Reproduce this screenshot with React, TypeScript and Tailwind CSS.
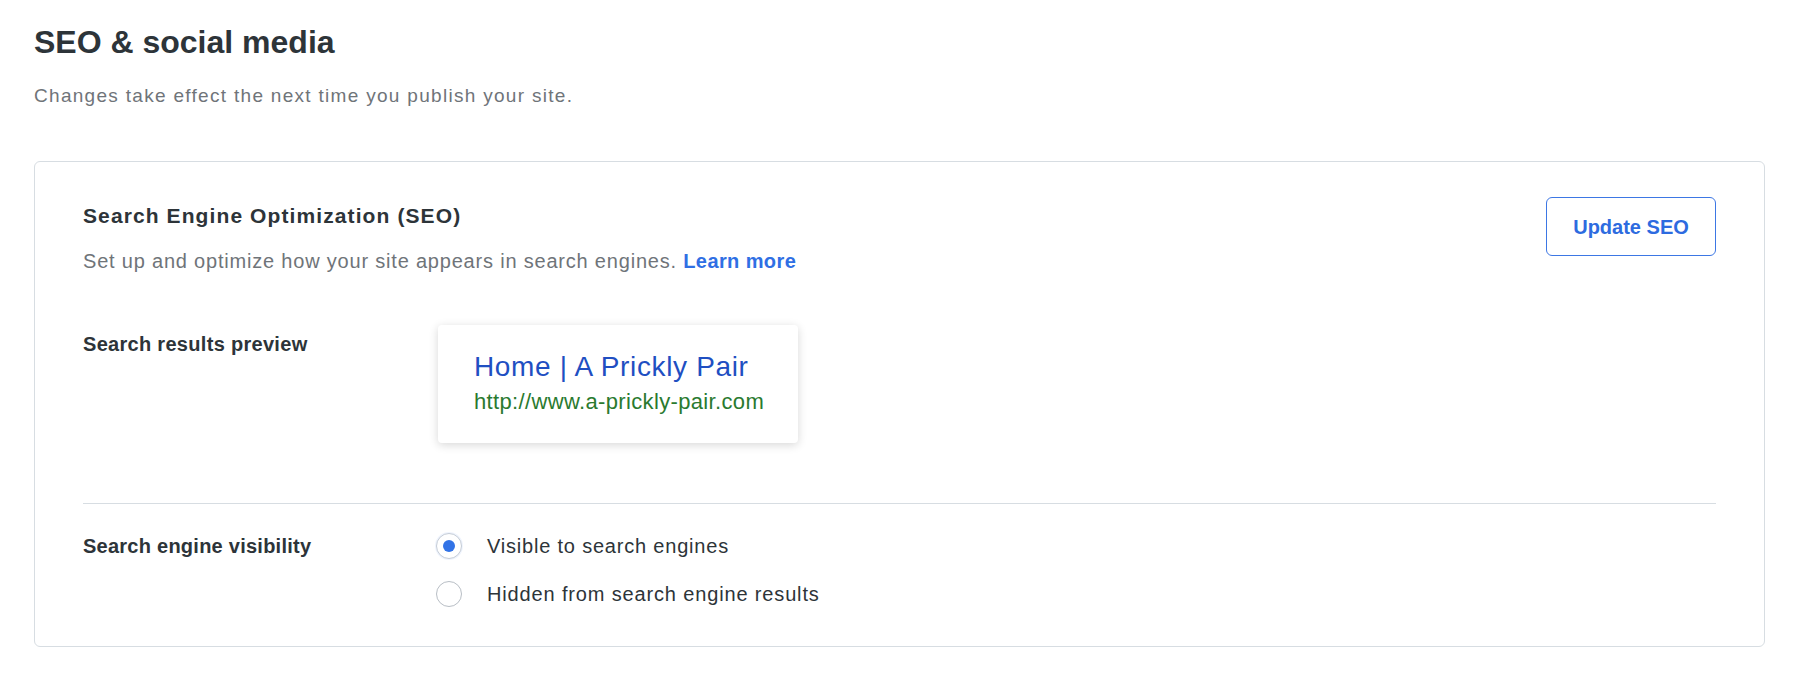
export default function App() {
  return (
    <div
      className="min-h-screen bg-white px-[34px] pt-[22px] text-[#2b3137]"
      style={{ fontFamily: '"Liberation Sans", Arial, sans-serif' }}
    >
      <h1 className="text-[32px] font-bold leading-[40px] text-[#2d3439]">SEO &amp; social media</h1>
      <p className="mt-[20px] text-[19px] leading-[28px] tracking-[1.3px] text-[#6f7479]">
        Changes take effect the next time you publish your site.
      </p>

      <section className="mt-[51px] w-[1731px] rounded-[6px] border border-[#d7dde2] px-[48px] pt-[35px] pb-[38px]">
        {/* header */}
        <div className="flex items-start justify-between">
          <div className="pt-[5px]">
            <h2 className="text-[21px] font-bold leading-[28px] tracking-[1.1px] text-[#2d3439]">
              Search Engine Optimization (SEO)
            </h2>
            <p className="mt-[17px] text-[20px] leading-[28px] tracking-[0.8px] text-[#6f7479]">
              Set up and optimize how your site appears in search engines.{' '}
              <a href="#" className="font-bold tracking-[0.4px] text-[#2f6fe4]">
                Learn more
              </a>
            </p>
          </div>
          <button className="h-[59px] w-[170px] rounded-[6px] border-[1.5px] border-[#3d77e4] text-[20px] font-bold text-[#2d6be0]">
            Update SEO
          </button>
        </div>

        {/* preview */}
        <div className="mt-[50px] flex items-start">
          <div className="w-[355px] pt-[5px] text-[20px] font-bold leading-[28px] tracking-[0.3px] text-[#2d3439]">
            Search results preview
          </div>
          <div className="w-[360px] rounded-[4px] bg-white pl-[36px] pt-[24px] pb-[27px] shadow-[0_2px_10px_rgba(0,0,0,0.16)]">
            <div className="text-[28px] leading-[36px] tracking-[0.65px] text-[#1f4fc2]">Home | A Prickly Pair</div>
            <div className="mt-[3px] text-[22px] leading-[28px] tracking-[0.35px] text-[#2a7a2f]">
              http://www.a-prickly-pair.com
            </div>
          </div>
        </div>

        <div className="mt-[60px] h-px bg-[#d7dde2]" />

        {/* visibility */}
        <div className="mt-[28px] flex items-start">
          <div className="w-[353px] text-[20px] font-bold leading-[28px] tracking-[0.25px] text-[#2d3439]">
            Search engine visibility
          </div>
          <div className="flex flex-col gap-[20px]">
            <label className="flex h-[28px] items-center">
              <span className="flex h-[26px] w-[26px] items-center justify-center rounded-full border border-[#c5ccd6] bg-white shadow-[0_0_0_1px_rgba(47,111,228,0.08)]">
                <span className="h-[12px] w-[12px] rounded-full bg-[#3273e6]" />
              </span>
              <span className="ml-[25px] text-[20px] leading-[28px] tracking-[0.8px] text-[#2d3439]">
                Visible to search engines
              </span>
            </label>
            <label className="flex h-[28px] items-center">
              <span className="h-[26px] w-[26px] rounded-full border border-[#b8bec5] bg-white" />
              <span className="ml-[25px] text-[20px] leading-[28px] tracking-[0.85px] text-[#2d3439]">
                Hidden from search engine results
              </span>
            </label>
          </div>
        </div>
      </section>
    </div>
  );
}
